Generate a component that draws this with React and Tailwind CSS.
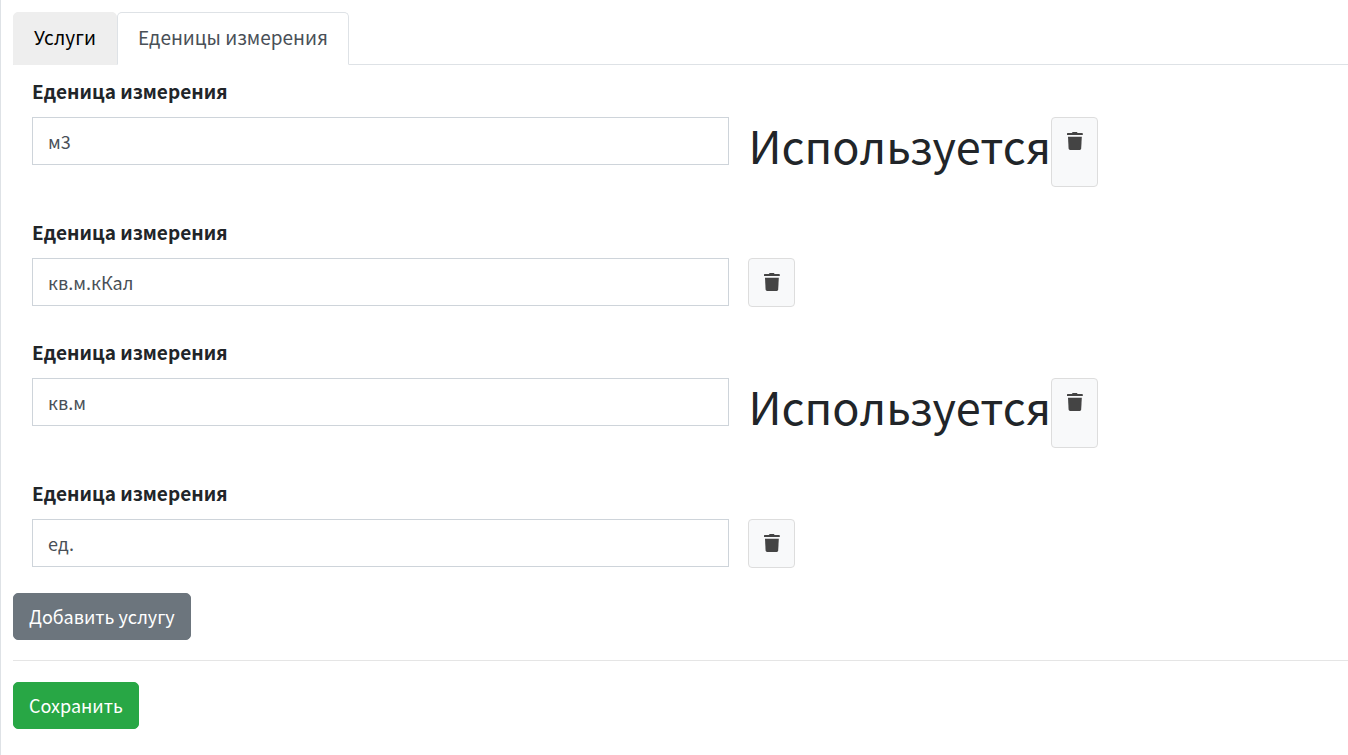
import React, { useState } from 'react';

const initialUnits = [
  { id: 1, name: 'м3', used: true },
  { id: 2, name: 'кв.м.кКал', used: false },
  { id: 3, name: 'кв.м', used: true },
  { id: 4, name: 'ед.', used: false }
];

const TrashIcon = () => (
  <svg className="h-[18px] w-[17px]" viewBox="0 0 17 18" fill="currentColor" aria-hidden="true">
    <path d="M1 1.600C1 1.200 1.200 1 1.600 1H5.800L6.300.4C6.500.1 6.700 0 7 0H10.500C10.800 0 11 .1 11.200.4L11.700 1H16.200C16.600 1 16.800 1.200 16.800 1.600V3H1Z" />
    <path d="M2 4.800H15.800L15.200 16.600C15.100 17.500 14.600 18 13.800 18H4.100C3.300 18 2.700 17.500 2.600 16.600Z" />
  </svg>
);

const UnitRow = ({ unit, onChange, onRemove }) => (
  <div className="mb-8">
    <label htmlFor={`unit-${unit.id}`} className="mb-3.5 block leading-[25px] font-bold">
      Еденица измерения
    </label>
    <div className="flex items-start">
      <input
        id={`unit-${unit.id}`}
        type="text"
        value={unit.name}
        onChange={(e) => onChange(unit.id, e.target.value)}
        className="mr-[19px] h-12 w-[53%] border border-[#ced4da] bg-white px-[15px] text-[18px] text-[#495057]"
      />
      <div className="flex">
        {unit.used && <h1 className="mb-3.5 text-[45px] leading-[56px]">Используется</h1>}
        <button
          type="button"
          aria-label="Удалить"
          onClick={() => onRemove(unit.id)}
          className="flex min-h-[49px] items-start rounded border border-[#ddd] bg-[#f8f9fa] px-3.5 pt-3.5 text-[#444]"
        >
          <TrashIcon />
        </button>
      </div>
    </div>
  </div>
);

const App = () => {
  const [tab, setTab] = useState('units');
  const [units, setUnits] = useState(initialUnits);

  const changeUnit = (id, name) => {
    setUnits(prev => prev.map(u => (u.id === id ? { ...u, name } : u)));
  };

  const removeUnit = (id) => {
    setUnits(prev => prev.filter(u => u.id !== id));
  };

  const addUnit = () => {
    setUnits(prev => [...prev, { id: Date.now(), name: '', used: false }]);
  };

  const tabs = [
    { id: 'services', label: 'Услуги' },
    { id: 'units', label: 'Еденицы измерения' }
  ];

  return (
    <div className="min-h-screen border-l border-[#dee2e6] bg-white pt-3 pl-3 font-['Noto_Sans_CJK_JP','Noto_Sans',sans-serif] text-[19px] leading-[29px] text-[#212529]">
      {/* Tabs */}
      <div role="tablist" className="flex border-b border-[#dee2e6]">
        {tabs.map(t => (
          <button
            key={t.id}
            type="button"
            role="tab"
            aria-selected={tab === t.id}
            onClick={() => setTab(t.id)}
            className={
              tab === t.id
                ? '-mb-px rounded-t-[5px] border border-[#dee2e6] border-b-white bg-white px-5 pt-[9px] pb-[13px] text-[#495057]'
                : '-mb-px rounded-t-[5px] border border-[#eee] bg-[#eee] px-5 pt-[9px] pb-[13px] text-black'
            }
          >
            {t.label}
          </button>
        ))}
      </div>

      <form onSubmit={(e) => e.preventDefault()}>
        {tab === 'units' && (
          <div className="pt-[13px]">
            <div className="-mb-[7px] pl-[19px]">
              {units.map(unit => (
                <UnitRow key={unit.id} unit={unit} onChange={changeUnit} onRemove={removeUnit} />
              ))}
            </div>
            <button
              type="button"
              onClick={addUnit}
              className="rounded-[5px] border border-[#6c757d] bg-[#6c757d] px-[15px] py-2 text-[18px] text-white"
            >
              Добавить услугу
            </button>
          </div>
        )}

        <hr className="mt-5 mb-[21px] border-[#e5e5e5]" />
        <button
          type="submit"
          className="rounded-[5px] border border-[#28a745] bg-[#28a745] px-[15px] py-2 text-[18px] text-white"
        >
          Сохранить
        </button>
      </form>
    </div>
  );
};

export default App;
